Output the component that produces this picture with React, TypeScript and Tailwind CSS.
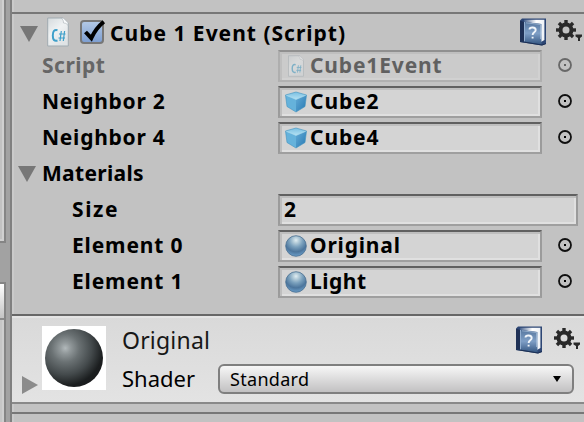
import { useId, type ReactNode } from "react";

const bold = "font-['Noto_Sans','Open_Sans',sans-serif] font-bold text-[21px] leading-[30px] whitespace-pre";
const regular = "font-['Noto_Sans','Open_Sans',sans-serif] font-normal whitespace-pre";

function ScriptIcon({ size, className = "" }: { size: "lg" | "sm"; className?: string }) {
  const id = useId();
  return (
    <svg className={`shrink-0 ${size === "lg" ? "h-[30px] w-[22px]" : "h-[22px] w-4"} ${className}`} viewBox="0 0 22 30" preserveAspectRatio="none">
      <defs>
        <linearGradient id={id} x1="0" y1="0" x2="0.6" y2="1">
          <stop offset="0" stopColor="#d5dadd" />
          <stop offset="0.5" stopColor="#eff2f3" />
          <stop offset="1" stopColor="#dfe3e5" />
        </linearGradient>
      </defs>
      <path d="M.7 1H15.5L21.3 6.5V29H.7Z" fill={`url(#${id})`} stroke="#a0abb1" strokeWidth="1" />
      <path d="M14.5 1Q17 4 16.5 6Q19 5.5 21.3 8.5L20.8 5.5L16.5 1.2Z" fill="#fafcfd" stroke="#a9b2b7" strokeWidth=".6" />
      <path d="M10.5 13.3Q5.8 12 5.8 18.4Q5.8 25 10.5 23.5" fill="none" stroke="#3d9fca" strokeWidth="2" />
      <path d="M14.3 14L13 24M17.6 14L16.3 24M12 17H18.5M11.5 21H18" fill="none" stroke="#3d9fca" strokeWidth="1.2" />
    </svg>
  );
}

function CubeIcon() {
  const id = useId();
  return (
    <svg className="h-[22px] w-[22px] shrink-0" viewBox="0 0 22 22">
      <defs>
        <linearGradient id={`${id}t`} x1="0" y1="0" x2="0" y2="1">
          <stop offset="0" stopColor="#79bfe1" />
          <stop offset="1" stopColor="#b5e2f4" />
        </linearGradient>
        <linearGradient id={`${id}r`} x1="0" y1="0" x2="1" y2="1">
          <stop offset="0" stopColor="#64acd7" />
          <stop offset="1" stopColor="#2778b2" />
        </linearGradient>
      </defs>
      <path d="M.5 4L11 1L21.5 4L11 8.5Z" fill={`url(#${id}t)`} />
      <path d="M.5 4L11 8.5V21L2 15.5Z" fill="#65b2db" />
      <path d="M21.5 4L11 8.5V21L20 15.5Z" fill={`url(#${id}r)`} />
      <path d="M.5 4L11 8.5L21.5 4" fill="none" stroke="#a8dcf1" strokeWidth=".6" />
      <path d="M.5 4L2 15.5L11 21L20 15.5L21.5 4L11 1Z" fill="none" stroke="#3f92bf" strokeWidth=".6" />
    </svg>
  );
}

function MaterialIcon() {
  const id = useId();
  return (
    <svg className="h-[22px] w-[22px] shrink-0" viewBox="0 0 22 22">
      <defs>
        <radialGradient id={id} cx=".5" cy=".22" r=".78">
          <stop offset="0" stopColor="#e0edf2" />
          <stop offset=".18" stopColor="#b4ccd9" />
          <stop offset=".42" stopColor="#7ba1bd" />
          <stop offset=".72" stopColor="#4c759c" />
          <stop offset="1" stopColor="#6b9ec9" />
        </radialGradient>
      </defs>
      <circle cx="11" cy="11" r="10.3" fill={`url(#${id})`} stroke="#496f91" strokeWidth=".8" />
    </svg>
  );
}

function BookIcon() {
  const id = useId();
  return (
    <svg className="h-7 w-[27px] shrink-0" viewBox="0 0 27 28">
      <defs>
        <linearGradient id={id} x1="0" y1="0" x2="0" y2="1">
          <stop offset="0" stopColor="#56779f" />
          <stop offset=".5" stopColor="#7f9fc6" />
          <stop offset="1" stopColor="#345681" />
        </linearGradient>
        <linearGradient id={`${id}p`} x1="0" y1="0" x2="1" y2="0">
          <stop offset="0" stopColor="#45608c" />
          <stop offset=".6" stopColor="#ffffff" />
          <stop offset="1" stopColor="#eef2f7" />
        </linearGradient>
      </defs>
      <path d="M2 .5H26V26L22 27.5L0 24V2.5Z" fill="#2d4674" />
      <path d="M4 1.8H24.4V22L21 24V6L4 4Z" fill={`url(#${id}p)`} />
      <path d="M4 4L21.5 6V26.5L4 23.5Z" fill={`url(#${id})`} />
      <path d="M0 2.5L4 4V23.5L0 23Z" fill="#1f3156" />
      <path d="M4.5 4V23.5" stroke="#93afd0" strokeWidth="1" />
      <path d="M6 4.8L20.5 6.5V21" fill="none" stroke="#a9c0da" strokeWidth=".7" />
      <path d="M9.5 11.5C9.7 8.8 15.7 8.8 15.7 12C15.7 14.5 12.8 14.2 12.6 17M12.6 18.8V20.5" fill="none" stroke="#f0f5fa" strokeWidth="1.9" />
      <path d="M0 23.5L22 27L26 25.5" fill="none" stroke="#1c3054" strokeWidth="1" />
    </svg>
  );
}

const teeth = [0, 45, 90, 135, 180, 225, 270, 315];

function GearIcon() {
  return (
    <svg className="h-6 w-[27px] shrink-0" viewBox="0 0 27 24">
      <g fill="#292929">
        {teeth.map((a) => (
          <rect key={a} x="8.3" y="0" width="3.4" height="5" transform={`rotate(${a} 10 10)`} />
        ))}
      </g>
      <circle cx="10" cy="10" r="5.5" fill="none" stroke="#292929" strokeWidth="4" />
      <path d="M19.5 14.5H26V16.5L24 18V21H22V18L19.5 16.5Z" fill="#292929" />
    </svg>
  );
}

function Picker({ muted = false }: { muted?: boolean }) {
  return (
    <svg className={`ml-4 -mt-[2px] h-[14px] w-[14px] shrink-0 ${muted ? "opacity-50" : ""}`} viewBox="0 0 14 14">
      <circle cx="7" cy="7" r="6" fill="none" stroke="#101010" strokeWidth="1.8" />
      <rect x="6" y="6" width="2" height="2" fill="#000" />
    </svg>
  );
}

function Field({ wide = false, muted = false, children }: { wide?: boolean; muted?: boolean; children: ReactNode }) {
  return (
    <div
      className={`flex h-8 shrink-0 items-center border-2 border-x-[#9b9b9b] border-b-[#9f9f9f] border-t-[#606060] bg-[#d4d4d4] pl-[5px] shadow-[inset_2px_2px_0_#bebebe,inset_-2px_-2px_0_#e0e0e0] ${wide ? "w-[300px]" : "w-[264px]"} ${muted ? "opacity-50" : ""}`}
    >
      {children}
    </div>
  );
}

function Row({ label, tracking, nested = false, muted = false, children }: { label: string; tracking: string; nested?: boolean; muted?: boolean; children: ReactNode }) {
  return (
    <div className="flex h-9 items-start">
      <div className={`flex h-8 w-[266px] shrink-0 items-start ${nested ? "pl-[60px]" : "pl-[30px]"}`}>
        <span className={`${bold} ${tracking} ${muted ? "text-[#666]" : "text-black"}`}>{label}</span>
      </div>
      <div className="flex h-8 items-center">{children}</div>
    </div>
  );
}

function Value({ text, tracking }: { text: string; tracking: string }) {
  return <span className={`${bold} ${tracking} -mt-[2px] ml-[3px] text-black`}>{text}</span>;
}

function LeftPanel() {
  return (
    <aside className="flex h-full w-3 shrink-0 flex-col border-r-2 border-[#808080] bg-[#a2a2a2]">
      <div className="h-[243px] w-[6px] border-b-2 border-r-2 border-[#858585] bg-[#c2c2c2]">
        <div className="h-full border-b-2 border-r-2 border-[#d0d0d0]" />
      </div>
      <div className="h-[39px]" />
      <div className="w-[6px] flex-1 border-r-2 border-t-2 border-[#858585] bg-[#c6c6c6]">
        <div className="h-9 border-b-2 border-b-[#8b8b8b] bg-gradient-to-b from-white to-[#c4c4c4]" />
        <div className="h-[102px] border-r-2 border-[#cecece]" />
      </div>
    </aside>
  );
}

function PreviewSphere() {
  return (
    <svg className="h-16 w-16" viewBox="0 0 64 64">
      <defs>
        <radialGradient id="preview-sphere" cx=".35" cy=".33" r=".76">
          <stop offset="0" stopColor="#b2b9bb" />
          <stop offset=".12" stopColor="#92999b" />
          <stop offset=".32" stopColor="#6a7173" />
          <stop offset=".6" stopColor="#444a4c" />
          <stop offset=".85" stopColor="#1b1e1f" />
          <stop offset="1" stopColor="#191a1c" />
        </radialGradient>
      </defs>
      <circle cx="32" cy="32" r="29" fill="url(#preview-sphere)" />
    </svg>
  );
}

export default function App() {
  return (
    <div className="flex h-[422px] w-[584px] overflow-hidden bg-[#c2c2c2]">
      <LeftPanel />
      <main className="min-w-0 flex-1 shadow-[inset_2px_0_0_#cacaca]">
        <div className="h-[14px] border-b-2 border-[#777]" />
        <header className="flex h-9 items-start">
          <svg className="ml-2 mt-3 h-4 w-[18px]" viewBox="0 0 18 16"><path d="M0 0H18L9 16Z" fill="#777" /></svg>
          <ScriptIcon size="lg" className="ml-[9px] mt-[3px]" />
          <div className="ml-[11px] mt-[6px] h-6 w-6 rounded-[4px] border-2 border-[#777] bg-gradient-to-b from-[#b2c8e5] to-[#7e9fd2]">
            <svg className="-ml-0.5 -mt-0.5 h-6 w-6 overflow-visible" viewBox="0 0 24 24"><path d="M5.5 12L11.3 18.2Q16 8 23.8 1.8" fill="none" stroke="#000" strokeWidth="4" /></svg>
          </div>
          <span className={`${bold} ml-[6px] mt-[4px] w-[245px] tracking-[1px]`}>Cube 1 Event (Script)</span>
          <div className="ml-[165px] mt-1"><BookIcon /></div>
          <div className="ml-[9px] mt-[6px]"><GearIcon /></div>
        </header>
        <Row label="Script" tracking="tracking-[0.5px]" muted>
          <Field muted><ScriptIcon size="sm" className="ml-[3px] mr-[3px]" /><Value text="Cube1Event" tracking="tracking-[0.85px]" /></Field>
          <Picker muted />
        </Row>
        <Row label="Neighbor 2" tracking="tracking-[0.75px]">
          <Field><CubeIcon /><Value text="Cube2" tracking="tracking-[0.9px]" /></Field><Picker />
        </Row>
        <Row label="Neighbor 4" tracking="tracking-[0.75px]">
          <Field><CubeIcon /><Value text="Cube4" tracking="tracking-[0.9px]" /></Field><Picker />
        </Row>
        <div className="flex h-9 items-start">
          <svg className="ml-[6px] mt-2 h-4 w-[18px]" viewBox="0 0 18 16"><path d="M0 0H18L9 16Z" fill="#777" /></svg>
          <span className={`${bold} ml-[6px] tracking-[0.3px]`}>Materials</span>
        </div>
        <Row label="Size" tracking="tracking-[1.6px]" nested>
          <Field wide><span className={`${bold} -ml-px -mt-[2px]`}>2</span></Field>
        </Row>
        <Row label="Element 0" tracking="tracking-[0.85px]" nested>
          <Field><MaterialIcon /><Value text="Original" tracking="tracking-[0.8px]" /></Field><Picker />
        </Row>
        <Row label="Element 1" tracking="tracking-[0.85px]" nested>
          <Field><MaterialIcon /><Value text="Light" tracking="tracking-[0.5px]" /></Field><Picker />
        </Row>
        <div className="h-3" />
        <section className="flex h-[90px] border-b-2 border-t-2 border-b-[#898989] border-t-[#676767] bg-gradient-to-b from-[#d9d9d9] to-[#e3e3e3] shadow-[inset_0_2px_0_#e4e4e4]">
          <svg className="ml-[10px] mt-[60px] h-[18px] w-4" viewBox="0 0 16 18"><path d="M0 0L16 9L0 18Z" fill="#8b8b8b" /></svg>
          <div className="ml-1 mt-[10px] h-16 w-16 bg-white"><PreviewSphere /></div>
          <div className="ml-4 flex-1">
            <div className="flex h-[52px] items-start">
              <span className={`${regular} mt-[8px] w-[120px] text-[23px] leading-8 tracking-[0.2px] text-[#171717]`}>Original</span>
              <div className="ml-[274px] mt-[10px]"><BookIcon /></div>
              <div className="ml-[11px] mt-[12px]"><GearIcon /></div>
            </div>
            <div className="-mt-[4px] flex h-[30px] items-center">
              <span className={`${regular} -mt-[2px] w-24 text-[22px] leading-[30px] tracking-[0px]`}>Shader</span>
              <div className="flex h-[30px] w-[356px] shrink-0 items-center justify-between rounded-[6px] border-2 border-[#7f7f7f] bg-gradient-to-b from-[#f7f7f7] to-[#c2c1c2] pl-[10px] pr-[11px]">
                <span className={`${regular} -mt-px text-[18px] leading-6 tracking-[0.3px]`}>Standard</span>
                <svg className="h-[6px] w-2" viewBox="0 0 8 6"><path d="M0 0H8L4 6Z" /></svg>
              </div>
            </div>
          </div>
        </section>
        <div className="h-[10px] border-b-2 border-[#777]" />
      </main>
    </div>
  );
}
